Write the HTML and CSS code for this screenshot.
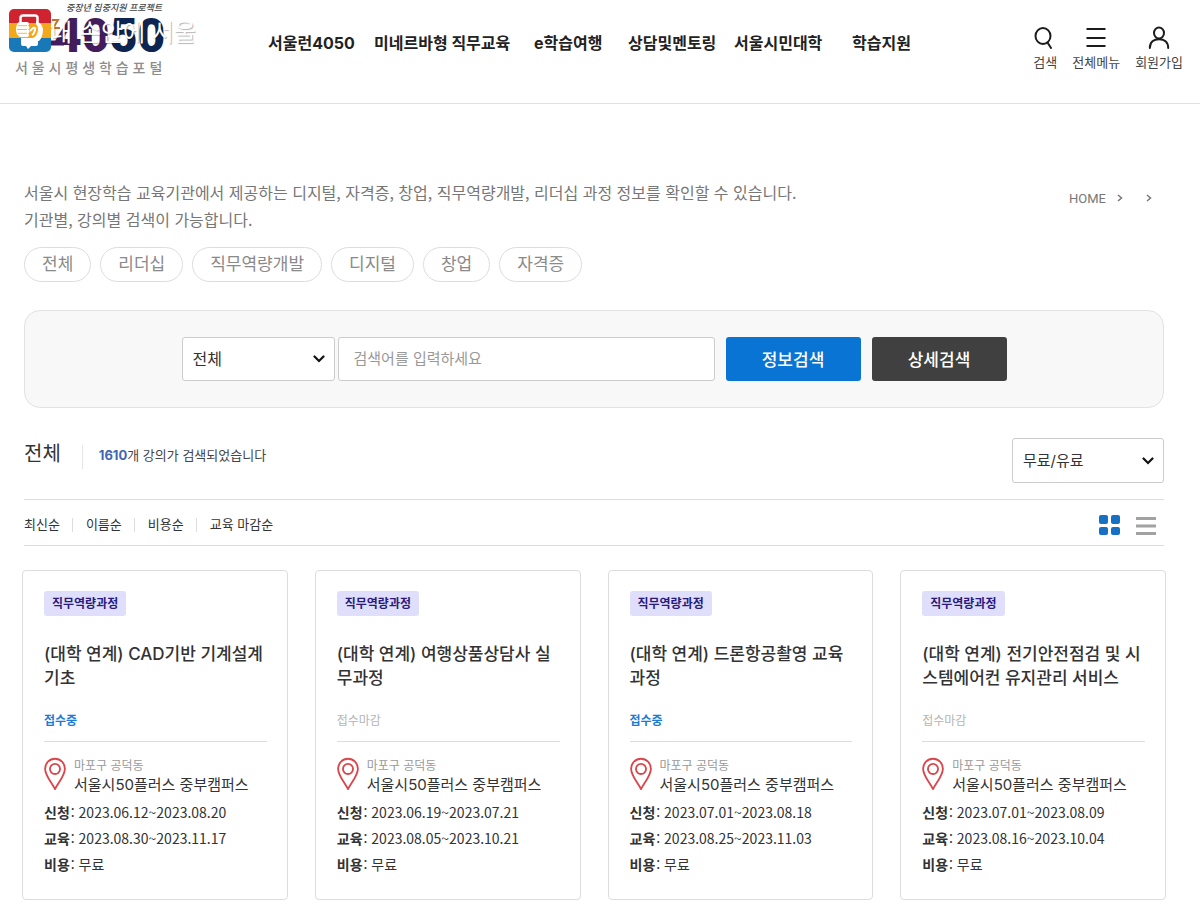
FILE: index.html
```html
<!DOCTYPE html>
<html lang="ko">
<head>
<meta charset="utf-8">
<meta name="viewport" content="width=device-width, initial-scale=1">
<title>서울시평생학습포털</title>
<link rel="stylesheet" href="styles.css">
</head>
<body>
<svg class="defs" width="0" height="0" aria-hidden="true">
  <symbol id="pin" viewBox="0 0 24 36">
    <path d="M12 34.500C9 28 1.200 20 1.200 12.200a10.800 10.800 0 0 1 21.600 0C22.800 20 15 28 12 34.500z" fill="none" stroke="#d9474b" stroke-width="2" stroke-linejoin="round"/>
    <circle cx="12" cy="12.500" r="5.500" fill="none" stroke="#d9474b" stroke-width="2"/>
  </symbol>
  <symbol id="chevron" viewBox="0 0 12 8">
    <path d="M1.500 1.500L6 6l4.500-4.500" fill="none" stroke="#111" stroke-width="2.200" stroke-linecap="round"/>
  </symbol>
  <symbol id="next" viewBox="0 0 6 8">
    <path d="M1 1l3.500 3L1 7" fill="none" stroke="#777" stroke-width="1.500"/>
  </symbol>
</svg>

<header class="header">
  <a class="logo" href="#">
    <svg width="200" height="84" viewBox="0 0 200 84" role="img" aria-label="서울시평생학습포털">
      <text class="logo-script" x="66" y="11">중장년 집중지원 프로젝트</text>
      <path d="M52 20h6l-5 8h7" fill="none" stroke="#c9702e" stroke-width="2"/>
      <path d="M50 43h14" stroke="#421c5c" stroke-width="5"/>
      <text class="logo-num" x="54" y="52"><tspan fill="#421c5c">40</tspan><tspan fill="#0d2450">50</tspan></text>
      <text class="logo-name" x="15" y="73">서 울 시 평 생 학 습 포 털</text>
      <clipPath id="badge"><rect x="9" y="9" width="42" height="43" rx="5"/></clipPath>
      <g clip-path="url(#badge)">
        <path fill="#cf2330" d="M9 9h42v14H9z"/>
        <path fill="#f3a81c" d="M9 23h42v15H9z"/>
        <path fill="#1878b8" d="M9 38h42v14H9z"/>
      </g>
      <path d="M20.500 22v-4q0-2.500 2.500-2.500h12q2.500 0 2.500 2.500v4" fill="none" stroke="#fff" stroke-width="2.500"/>
      <path fill="#fff" d="M19 22h8q2 0 2 2 0 1-1 1.700 1.500.500 1.500 2T28 29.500q1.500.500 1.500 2T28 33.300q1 .500 1 1.700 0 2-2 2h-7q-4-2-4-7.500T19 22z"/>
      <path d="M18 25.700h9M17 29.500h10M18 33.300h9" stroke="#f3a81c" stroke-width=".8"/>
      <path d="M30 31l3-3q3-1 2 2-1 4-3 5" fill="none" stroke="#fff" stroke-width="2"/>
      <path fill="#fff" d="M36 21q6 2 7 8 0 8-4 12H26v-3h7q5-3 5-8 0-4-2-6z"/>
      <path fill="#fff" d="M21 38h17v6q0 2-2 2h-5l-3 3-2-3h-3q-2 0-2-2z"/>
      <text class="logo-over" x="50" y="41">내 손안에 서울</text>
    </svg>
  </a>
  <nav class="nav" aria-label="주메뉴">
    <a href="#">서울런4050</a>
    <a href="#">미네르바형 직무교육</a>
    <a href="#">e학습여행</a>
    <a href="#">상담및멘토링</a>
    <a href="#">서울시민대학</a>
    <a href="#">학습지원</a>
  </nav>
  <div class="tools">
    <button class="tool" type="button">
      <svg width="24" height="24" viewBox="0 0 24 24" fill="none" stroke="#1c1c1c" stroke-width="2" stroke-linecap="round"><ellipse cx="10" cy="10" rx="7.500" ry="8"/><path d="M14.500 16.500L18 22"/></svg>
      <span>검색</span>
    </button>
    <button class="tool" type="button">
      <svg width="24" height="24" viewBox="0 0 24 24" fill="none" stroke="#1c1c1c" stroke-width="2"><path d="M2.500 3h19M2.500 12h19M2.500 20h19"/></svg>
      <span>전체메뉴</span>
    </button>
    <a class="tool" href="#">
      <svg width="24" height="24" viewBox="0 0 24 24" fill="none" stroke="#1c1c1c" stroke-width="2" stroke-linecap="round"><ellipse cx="12" cy="7" rx="5" ry="5.500"/><path d="M2.800 22c0-6 4-8.800 9.200-8.800s9.200 2.800 9.200 8.800"/></svg>
      <span>회원가입</span>
    </a>
  </div>
</header>

<main class="main">
  <div class="intro">
    <p class="intro-text">서울시 현장학습 교육기관에서 제공하는 디지털, 자격증, 창업, 직무역량개발, 리더십 과정 정보를 확인할 수 있습니다.<br>기관별, 강의별 검색이 가능합니다.</p>
    <nav class="crumbs" aria-label="현재 위치">
      <a href="#">HOME</a>
      <svg width="6" height="8"><use href="#next"/></svg>
      <svg class="crumb-last" width="6" height="8"><use href="#next"/></svg>
    </nav>
  </div>

  <div class="pills">
    <a href="#">전체</a>
    <a href="#">리더십</a>
    <a href="#">직무역량개발</a>
    <a href="#">디지털</a>
    <a href="#">창업</a>
    <a href="#">자격증</a>
  </div>

  <form class="search">
    <span class="select">
      <select aria-label="검색 구분"><option>전체</option></select>
      <svg width="12" height="8"><use href="#chevron"/></svg>
    </span>
    <input class="keyword" type="text" aria-label="검색어" placeholder="검색어를 입력하세요">
    <button class="btn btn-blue" type="button">정보검색</button>
    <button class="btn btn-dark" type="button">상세검색</button>
  </form>

  <div class="result">
    <h1>전체</h1>
    <p class="count"><strong>1610</strong>개 강의가 검색되었습니다</p>
    <span class="select select-fee">
      <select aria-label="무료/유료"><option>무료/유료</option></select>
      <svg width="12" height="8"><use href="#chevron"/></svg>
    </span>
  </div>

  <div class="sortbar">
    <ul class="sort">
      <li><a href="#">최신순</a></li>
      <li><a href="#">이름순</a></li>
      <li><a href="#">비용순</a></li>
      <li><a href="#">교육 마감순</a></li>
    </ul>
    <div class="views">
      <button type="button" aria-label="카드형 보기"><svg width="22" height="22" viewBox="0 0 22 22" fill="#1670c4"><rect x="1" y="1" width="9" height="9" rx="2"/><rect x="13" y="1" width="9" height="9" rx="2"/><rect x="1" y="13" width="9" height="8" rx="2"/><rect x="13" y="13" width="9" height="8" rx="2"/></svg></button>
      <button type="button" aria-label="목록형 보기"><svg width="22" height="22" viewBox="0 0 22 22" stroke="#a2a2a2" stroke-width="3"><path d="M1 4.500h20M1 12h20M1 19.500h20"/></svg></button>
    </div>
  </div>

  <div class="cards">
    <article class="card">
      <span class="tag">직무역량과정</span>
      <h2>(대학 연계) CAD기반 기계설계 기초</h2>
      <p class="status open">접수중</p>
      <div class="place">
        <svg width="22" height="34"><use href="#pin"/></svg>
        <p><small>마포구 공덕동</small>서울시50플러스 중부캠퍼스</p>
      </div>
      <dl>
        <div><dt>신청</dt><dd>: 2023.06.12~2023.08.20</dd></div>
        <div><dt>교육</dt><dd>: 2023.08.30~2023.11.17</dd></div>
        <div><dt>비용</dt><dd>: 무료</dd></div>
      </dl>
    </article>
    <article class="card">
      <span class="tag">직무역량과정</span>
      <h2>(대학 연계) 여행상품상담사 실무과정</h2>
      <p class="status">접수마감</p>
      <div class="place">
        <svg width="22" height="34"><use href="#pin"/></svg>
        <p><small>마포구 공덕동</small>서울시50플러스 중부캠퍼스</p>
      </div>
      <dl>
        <div><dt>신청</dt><dd>: 2023.06.19~2023.07.21</dd></div>
        <div><dt>교육</dt><dd>: 2023.08.05~2023.10.21</dd></div>
        <div><dt>비용</dt><dd>: 무료</dd></div>
      </dl>
    </article>
    <article class="card">
      <span class="tag">직무역량과정</span>
      <h2>(대학 연계) 드론항공촬영 교육과정</h2>
      <p class="status open">접수중</p>
      <div class="place">
        <svg width="22" height="34"><use href="#pin"/></svg>
        <p><small>마포구 공덕동</small>서울시50플러스 중부캠퍼스</p>
      </div>
      <dl>
        <div><dt>신청</dt><dd>: 2023.07.01~2023.08.18</dd></div>
        <div><dt>교육</dt><dd>: 2023.08.25~2023.11.03</dd></div>
        <div><dt>비용</dt><dd>: 무료</dd></div>
      </dl>
    </article>
    <article class="card">
      <span class="tag">직무역량과정</span>
      <h2>(대학 연계) 전기안전점검 및 시스템에어컨 유지관리 서비스</h2>
      <p class="status">접수마감</p>
      <div class="place">
        <svg width="22" height="34"><use href="#pin"/></svg>
        <p><small>마포구 공덕동</small>서울시50플러스 중부캠퍼스</p>
      </div>
      <dl>
        <div><dt>신청</dt><dd>: 2023.07.01~2023.08.09</dd></div>
        <div><dt>교육</dt><dd>: 2023.08.16~2023.10.04</dd></div>
        <div><dt>비용</dt><dd>: 무료</dd></div>
      </dl>
    </article>
  </div>
</main>
</body>
</html>
```
FILE: styles.css
```css
* { box-sizing: border-box; }
body {
  margin: 0;
  background: #fff;
  color: #333;
  font-family: Inter, "Noto Sans CJK KR", sans-serif;
  font-size: 14px;
}
h1, h2, p, dl, dd, ul { margin: 0; padding: 0; }
a { color: inherit; text-decoration: none; }
button, input, select { font: inherit; color: inherit; }
button { border: 0; padding: 0; background: none; cursor: pointer; }
svg { display: block; flex: none; }
.defs { position: absolute; }

.header {
  display: flex;
  align-items: flex-start;
  height: 104px;
  padding-right: 17px;
  border-bottom: 1px solid #e2e2e2;
}
.logo { width: 268px; }
.logo-script {
  font-family: "Noto Sans CJK KR", sans-serif;
  font-size: 9px;
  font-weight: 500;
  font-style: italic;
  fill: #444;
}
.logo-num { font-family: Roboto, sans-serif; font-size: 48px; font-weight: 900; }
.logo-name { font-family: "Noto Sans CJK KR", sans-serif; font-size: 14px; font-weight: 500; fill: #8d8d8d; }
.logo-over {
  font-family: "Noto Sans CJK KR", sans-serif;
  font-size: 24px;
  font-weight: 400;
  fill: #fff;
  text-shadow: 1px 1px 1px rgba(0, 0, 0, .3);
}
.nav {
  display: grid;
  grid-template-columns: 106px 160px 94px 106px 118px auto;
  padding-top: 31px;
  font-size: 16px;
  font-weight: 700;
  line-height: 24px;
  color: #222;
  white-space: nowrap;
}
.tools { display: flex; gap: 15px; margin-left: auto; padding-top: 26px; }
.tool {
  display: flex;
  flex-direction: column;
  align-items: center;
  gap: 2px;
  font-size: 13px;
  line-height: 20px;
  color: #444;
}

.main { padding: 75px 36px 10px 24px; }
.intro { display: flex; justify-content: space-between; }
.intro-text {
  font-family: "Noto Sans CJK KR", sans-serif;
  font-size: 16px;
  line-height: 27px;
  color: #777;
}
.crumbs {
  display: flex;
  align-items: center;
  height: 38px;
  padding-right: 12px;
  font-family: Roboto, sans-serif;
  font-size: 13px;
  color: #777;
}
.crumbs a { margin-right: 11px; }
.crumb-last { margin-left: 23px; }

.pills { display: flex; gap: 9px; margin-top: 14px; }
.pills a {
  padding: 0 17px;
  border: 1px solid #ddd;
  border-radius: 18px;
  font-size: 17px;
  line-height: 33px;
  color: #8a8a8a;
}

.search {
  display: flex;
  justify-content: center;
  margin-top: 28px;
  padding: 26px;
  border: 1px solid #e2e2e2;
  border-radius: 16px;
  background: #f8f8f8;
}
.select { position: relative; width: 153px; height: 44px; }
.select select {
  width: 100%;
  height: 100%;
  padding: 0 10px;
  border: 1px solid #ccc;
  border-radius: 3px;
  background: #fff;
  font-size: 16px;
  appearance: none;
}
.select svg { position: absolute; right: 10px; top: 18px; pointer-events: none; }
.keyword {
  width: 377px;
  height: 44px;
  margin-left: 3px;
  padding: 0 15px 2px;
  border: 1px solid #ccc;
  border-radius: 3px;
  font-size: 15px;
}
.keyword::placeholder { color: #999; }
.btn {
  width: 135px;
  height: 44px;
  margin-left: 11px;
  padding-bottom: 2px;
  border-radius: 3px;
  color: #fff;
  font-size: 17px;
  font-weight: 500;
}
.btn-blue { background: #0974d4; }
.btn-dark { background: #404040; }

.result { display: flex; margin-top: 30px; padding-bottom: 16px; border-bottom: 1px solid #ddd; }
.result h1 { font-size: 20px; font-weight: 400; line-height: 32px; }
.count {
  height: 24px;
  margin: 7px 0 0 21px;
  padding-left: 16px;
  border-left: 1px solid #e5e5e5;
  font-size: 13px;
  line-height: 20px;
  color: #444;
}
.count strong { color: #4265b4; }
.select-fee { width: 152px; height: 45px; margin-left: auto; }
.select-fee select { font-size: 15px; }
.select-fee svg { top: 19px; }

.sortbar {
  display: flex;
  justify-content: space-between;
  align-items: center;
  height: 46px;
  padding-right: 7px;
  border-bottom: 1px solid #ddd;
}
.sort { display: flex; align-items: center; padding-top: 2px; list-style: none; font-size: 13px; line-height: 20px; }
.sort li { display: flex; align-items: center; }
.sort li + li::before {
  content: "";
  width: 1px;
  height: 14px;
  margin: 2px 13px 0 12px;
  background: #ddd;
}
.views { display: flex; gap: 15px; padding-top: 4px; }

.cards {
  display: grid;
  grid-template-columns: repeat(4, 1fr);
  gap: 27px;
  margin: 24px -2px 0;
}
.card { padding: 20px 20px 22px 21px; border: 1px solid #ddd; border-radius: 4px; }
.tag {
  display: inline-block;
  padding: 0 8px;
  border-radius: 3px;
  background: #dfdffc;
  color: #2b1a7e;
  font-size: 12px;
  font-weight: 700;
  line-height: 25px;
}
.card h2 { margin-top: 26px; font-size: 17px; font-weight: 500; line-height: 24px; }
.status {
  margin-top: 21px;
  padding-bottom: 10px;
  border-bottom: 1px solid #ddd;
  color: #b5b5b5;
  font-size: 12px;
  line-height: 20px;
}
.status.open { color: #1b7cd6; font-weight: 700; }
.place { display: flex; gap: 8px; padding-top: 15px; }
.place p { font-size: 15px; line-height: 20px; white-space: nowrap; }
.place small { display: block; color: #999; font-size: 12px; line-height: 18px; }
.card dl { margin-top: 4px; font-family: "Noto Sans CJK KR", sans-serif; font-size: 14px; line-height: 26px; }
.card dl div { display: flex; gap: 1px; }
.card dt { font-weight: 700; }
```
